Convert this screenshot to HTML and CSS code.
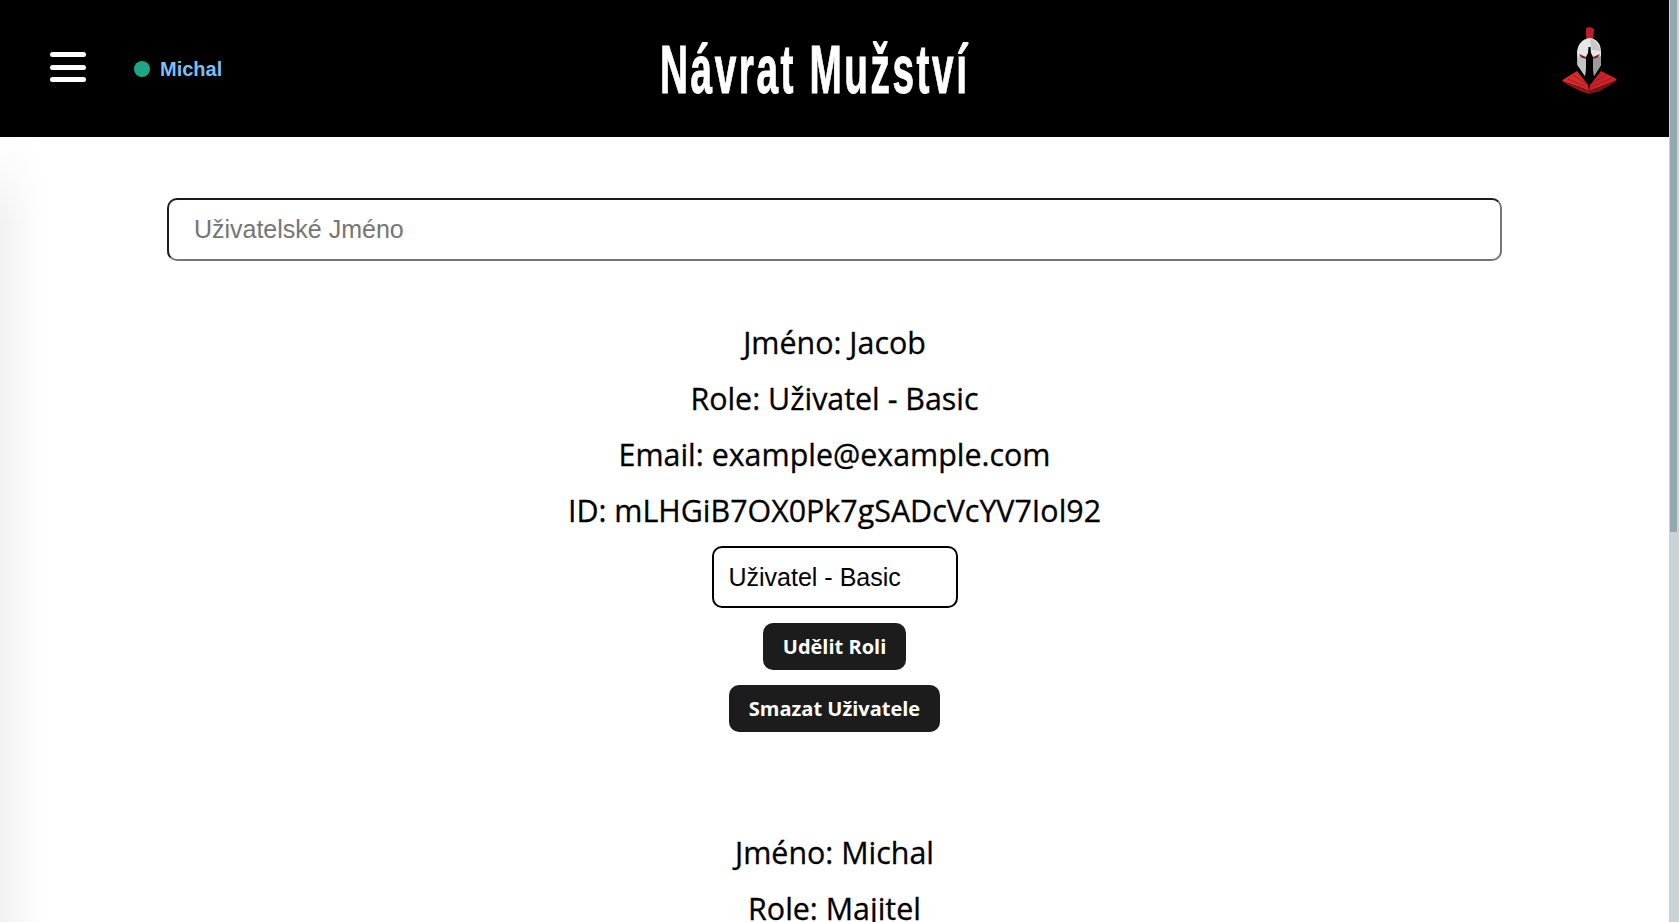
FILE: index.html
```html
<!DOCTYPE html>
<html lang="cs">
<head>
<meta charset="utf-8">
<title>Návrat Mužství</title>
<link rel="stylesheet" href="styles.css">
</head>
<body>
<div class="page">
  <header class="topbar">
    <div class="topbar-left">
      <div class="burger"><span></span><span></span><span></span></div>
      <div class="status"><span class="dot"></span><span class="status-name">Michal</span></div>
    </div>
    <h1 class="brand"><span class="brand-text">Návrat Mužství</span></h1>
    <svg class="logo" viewBox="0 0 70 80" aria-label="Logo">
      <path d="M36 8 L40 7 L44 9 L43.5 16 L41.5 25 L38 25 L36 16 Z" fill="#b5202b"/>
      <path d="M40 18 C32 19 28 24 27 32 L27.5 45 L35 56 L36 46 L36 37 L38 33 L38.5 27 L40.5 27 L41 33 L43 37 L43 46 L44 56 L51 45 L51 32 C51 24 47 19 40 18 Z" fill="#e6e6e6"/>
      <path d="M27.5 36 L36 39 L36 46 L35 56 L27.5 45 Z" fill="#c4c4c4"/>
      <path d="M51 36 L43 39 L43 46 L44 56 L51 45 Z" fill="#9a9a9a"/>
      <path d="M40 19 C45 20 49 24 50.5 31 L42 30 L41 27 Z" fill="#c8c8c8"/>
      <path d="M29 34 L36 37 L36 39 L31 37.5 Z M50 34 L43 37 L43 39 L48 37.5 Z" fill="#7a2530"/>
      <path d="M27 51 L38 65 L39 71 L30 67 L12 61 L14 59 Z" fill="#d62a2f"/>
      <path d="M51 51 L40 65 L39 71 L50 67 L67 60 L65 58 Z" fill="#c82429"/>
      <path d="M12 61 L30 67 L39 71 L39 74 L30 71 L16 64 Z" fill="#8b171c"/>
      <path d="M67 60 L50 67 L39 71 L39 74 L50 71 L62 64 Z" fill="#7a1317"/>
      <path d="M18 59 L37 67 M62 58 L41 67 M23 55 L38 65 M57 54 L40 65" stroke="#8e191d" stroke-width=".8" fill="none"/>
    </svg>
  </header>
  <main class="content">
    <div class="search-row">
      <input class="search" type="text" placeholder="Uživatelské Jméno">
    </div>
    <section class="user">
      <p class="user-line">Jméno: Jacob</p>
      <p class="user-line">Role: Uživatel - Basic</p>
      <p class="user-line">Email: example@example.com</p>
      <p class="user-line">ID: mLHGiB7OX0Pk7gSADcVcYV7Iol92</p>
      <div class="role-select"><span>Uživatel - Basic</span></div>
      <button class="action">Udělit Roli</button>
      <button class="action">Smazat Uživatele</button>
    </section>
    <section class="user">
      <p class="user-line">Jméno: Michal</p>
      <p class="user-line">Role: Majitel</p>
    </section>
  </main>
</div>
<div class="scrollbar"><div class="scrollbar-thumb"></div></div>
</body>
</html>
```
FILE: styles.css
```css
* { box-sizing: border-box; }
html, body { height: 100%; }
body { margin: 0; background: #fff; font-family: "Open Sans", sans-serif; color: #000; display: flex; overflow: hidden; }
.page { flex: 1; min-width: 0; display: flex; flex-direction: column; height: 100%; }
.scrollbar { width: 10px; flex: none; height: 100%; background: #c9d4d9; padding: 0 2px 0 1px; }
.scrollbar-thumb { height: 532px; background: #95a8b0; }
.topbar { flex: none; height: 137px; background: #000; display: flex; align-items: center; padding: 0 50px; position: relative; }
.topbar-left { display: flex; align-items: center; gap: 48px; }
.burger { width: 36px; display: flex; flex-direction: column; gap: 7.5px; margin-top: -3px; }
.burger span { display: block; height: 5px; border-radius: 3px; background: #fff; }
.status { display: flex; align-items: center; gap: 10px; margin-top: 1px; }
.dot { width: 16px; height: 16px; border-radius: 50%; background: #1fa583; }
.status-name { font-family: "Liberation Sans", sans-serif; font-weight: 700; font-size: 20px; color: #7fbdf2; }
.brand { position: absolute; left: 660px; top: 0; margin: 0; height: 137px; display: flex; align-items: center; font-family: "Liberation Sans", sans-serif; font-weight: 700; font-size: 68px; color: #fff; white-space: nowrap; }
.brand-text { display: block; transform: scaleX(0.57); transform-origin: left center; letter-spacing: 4.5px; -webkit-text-stroke: 1px #fff; }
.logo { position: absolute; left: 1550px; top: 20px; width: 70px; height: 80px; }
.content { flex: 1; min-height: 0; overflow: hidden; padding-top: 61px; background: linear-gradient(180deg, #fff, rgba(255,255,255,0) 90px), linear-gradient(90deg, #f1f1f1, #fff 45px); }
.search-row { display: flex; justify-content: center; }
.search { width: 80%; height: 63px; border: 2px solid; border-color: #1a1a1a #767676 #767676 #1a1a1a; border-radius: 10px; padding: 0 25px; font-family: "Liberation Sans", sans-serif; font-size: 25px; background: #fff; }
.search::placeholder { color: #757575; opacity: 1; }
.user { display: flex; flex-direction: column; align-items: center; padding-top: 54px; padding-bottom: 39px; }
.user-line { margin: 0; height: 56px; line-height: 56px; font-size: 30.4px; -webkit-text-stroke: 0.3px #000; }
.role-select { width: 246px; height: 62px; border: 2px solid #000; border-radius: 10px; display: flex; align-items: center; padding-left: 15px; margin-top: 7px; font-family: "Liberation Sans", sans-serif; font-size: 25px; background: #fff; }
.action { height: 47px; border: 0; border-radius: 10px; background: #1c1c1c; color: #fff; padding: 0 20px; font-family: "Open Sans", sans-serif; font-weight: 700; font-size: 20px; margin-top: 15px; }
```
